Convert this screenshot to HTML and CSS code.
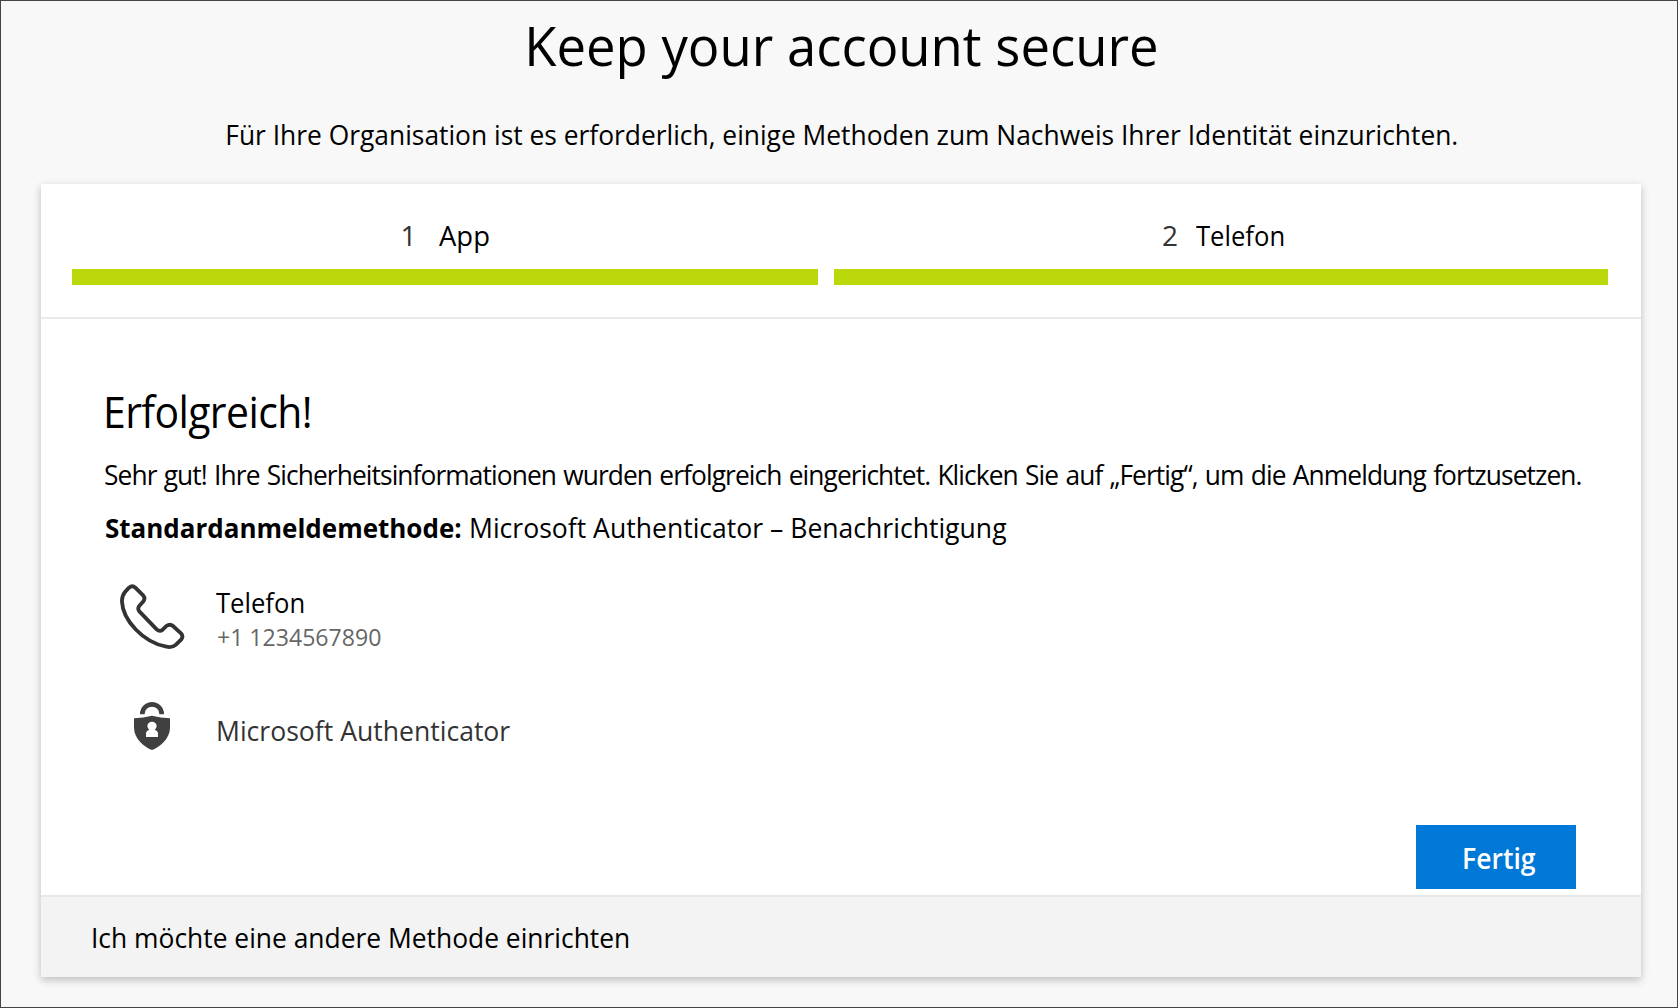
FILE: index.html
```html
<!DOCTYPE html>
<html lang="de">
<head>
  <meta charset="utf-8">
  <title>Keep your account secure</title>
  <link rel="stylesheet" href="styles.css">
</head>
<body>
  <main class="page">
    <header class="intro">
      <h1 class="intro-title">Keep your account secure</h1>
      <p class="intro-text">Für Ihre Organisation ist es erforderlich, einige Methoden zum Nachweis Ihrer Identität einzurichten.</p>
    </header>
    <section class="card">
      <div class="steps">
        <div class="step">
          <div class="step-label"><span class="step-number">1</span><span class="step-name step-name-app">App</span></div>
          <div class="step-bar"></div>
        </div>
        <div class="step">
          <div class="step-label step-label-phone"><span class="step-number">2</span><span class="step-name step-name-phone">Telefon</span></div>
          <div class="step-bar"></div>
        </div>
      </div>
      <div class="content">
        <h2 class="content-title">Erfolgreich!</h2>
        <p class="content-text">Sehr gut! Ihre Sicherheitsinformationen wurden erfolgreich eingerichtet. Klicken Sie auf „Fertig“, um die Anmeldung fortzusetzen.</p>
        <p class="default-method"><strong class="default-label">Standardanmeldemethode:</strong><span class="default-value">Microsoft Authenticator – Benachrichtigung</span></p>
        <div class="method">
          <div class="method-icon">
            <svg width="65" height="66" viewBox="60 42 195 198" fill="none" stroke="#333" stroke-width="11.5" stroke-linejoin="round">
              <path d="M87 53Q97 45 106 53L130 77Q137 86 129 95L117 109Q112 116 118 124L170 178Q179 186 188 179L199 168Q210 160 219 168L243 190Q251 199 244 208L228 224Q217 234 199 230C130 218 68 150 66 95Q65 79 75 66Z"/>
            </svg>
          </div>
          <div>
            <div class="method-name">Telefon</div>
            <div class="method-detail">+1 1234567890</div>
          </div>
        </div>
        <div class="method method-app">
          <div class="method-icon">
            <svg width="36" height="48" viewBox="72 36 108 144">
              <path d="M97 73V72A29 29 0 0 1 155 72V73" fill="none" stroke="#404040" stroke-width="14"/>
              <path d="M72 85Q101 83 126 77Q151 83 180 85V113C180 145 150 171 126 180C102 171 72 145 72 113Z" fill="#404040"/>
              <path d="M108 141V129Q109 122 118 119Q112 114 112 108A14 13 0 0 1 140 108Q140 114 134 119Q143 122 144 129V141Z" fill="#fff"/>
            </svg>
          </div>
          <div class="method-name method-name-app">Microsoft Authenticator</div>
        </div>
        <div class="actions">
          <button class="done-button" type="button"><span class="done-label">Fertig</span></button>
        </div>
      </div>
      <footer class="card-footer"><a class="other-method">Ich möchte eine andere Methode einrichten</a></footer>
    </section>
  </main>
</body>
</html>
```
FILE: styles.css
```css
* {
  box-sizing: border-box;
}

body {
  margin: 0;
  font-family: "Open Sans", "Noto Sans", sans-serif;
  color: #000;
}

h1,
h2,
p {
  margin: 0;
  font-weight: 400;
  white-space: nowrap;
}

.page {
  height: 1008px;
  padding: 14px 36px 0 40px;
  border: 1px solid #444;
  background: #f8f8f8;
  overflow: hidden;
}

.intro {
  display: flex;
  flex-direction: column;
  align-items: center;
  gap: 42px;
  width: 1600px;
}

.intro-title {
  font-size: 54.5px;
  line-height: 60px;
  transform: scaleX(0.966);
}

.intro-text {
  padding-left: 1px;
  font-size: 27.5px;
  line-height: 36px;
  transform: scaleX(0.959);
}

.card {
  display: flex;
  flex-direction: column;
  width: 1600px;
  height: 793px;
  margin-top: 31px;
  background: #fff;
  box-shadow: 0 3px 8px rgba(0, 0, 0, 0.24);
}

.steps {
  display: grid;
  grid-template-columns: 746px 774px;
  gap: 16px;
  height: 135px;
  padding: 33px 33px 0 31px;
  border-bottom: 2px solid #eaeaea;
}

.step-label {
  display: flex;
  justify-content: center;
  font-size: 28px;
  line-height: 36px;
}

.step-label-phone {
  padding-left: 4px;
}

.step-number {
  width: 16px;
  color: #333;
}

.step-name {
  white-space: nowrap;
  transform-origin: left;
}

.step-name-app {
  width: 51px;
  margin-left: 22px;
  transform: scaleX(0.98);
}

.step-name-phone {
  width: 88px;
  margin-left: 18px;
  transform: scaleX(0.915);
}

.step-bar {
  height: 16px;
  margin-top: 16px;
  background: #bad80a;
}

.content {
  display: flex;
  flex: 1;
  flex-direction: column;
  align-items: flex-start;
  padding: 65px 65px 6px 62px;
}

.content-title {
  font-size: 43.5px;
  line-height: 56px;
  letter-spacing: -0.61px;
  transform: scaleX(0.94);
  transform-origin: left;
}

.content-text {
  margin: 16px 0 0 1px;
  font-size: 28px;
  line-height: 36px;
  letter-spacing: -0.965px;
  word-spacing: 1.4px;
  transform: scaleX(0.94);
  transform-origin: left;
}

.default-method {
  display: flex;
  margin: 18px 0 0 2px;
  font-size: 27.5px;
  line-height: 36px;
}

.default-label {
  width: 364px;
  transform: scaleX(0.945);
  transform-origin: left;
}

.default-value {
  transform: scaleX(0.966);
  transform-origin: left;
}

.method {
  display: grid;
  grid-template-columns: 98px auto;
  column-gap: 15px;
  margin-top: 38px;
  white-space: nowrap;
}

.method-app {
  margin-top: 48px;
}

.method-icon {
  display: flex;
  align-items: flex-start;
  justify-content: center;
}

.method-name {
  font-size: 28px;
  line-height: 36px;
  transform: scaleX(0.915);
  transform-origin: left;
}

.method-name-app {
  margin-top: 10px;
  color: #333;
  transform: scaleX(0.949);
}

.method-detail {
  padding-left: 1px;
  color: #666;
  font-size: 24px;
  line-height: 34px;
  transform: scaleX(0.962);
  transform-origin: left;
}

.actions {
  align-self: flex-end;
  margin-top: auto;
}

.done-button {
  display: flex;
  align-items: center;
  justify-content: center;
  width: 160px;
  height: 64px;
  padding: 2px 0 0 6px;
  border: 0;
  background: #0078d7;
  color: #fff;
  font: 600 28px/36px "Open Sans", "Noto Sans", sans-serif;
}

.done-label {
  transform: scaleX(0.947);
}

.card-footer {
  display: flex;
  align-items: center;
  height: 82px;
  padding: 2px 0 0 50px;
  border-top: 2px solid #e8e8e8;
  background: #f3f3f3;
}

.other-method {
  font-size: 27.5px;
  line-height: 36px;
  white-space: nowrap;
  transform: scaleX(0.96);
  transform-origin: left;
}
```
